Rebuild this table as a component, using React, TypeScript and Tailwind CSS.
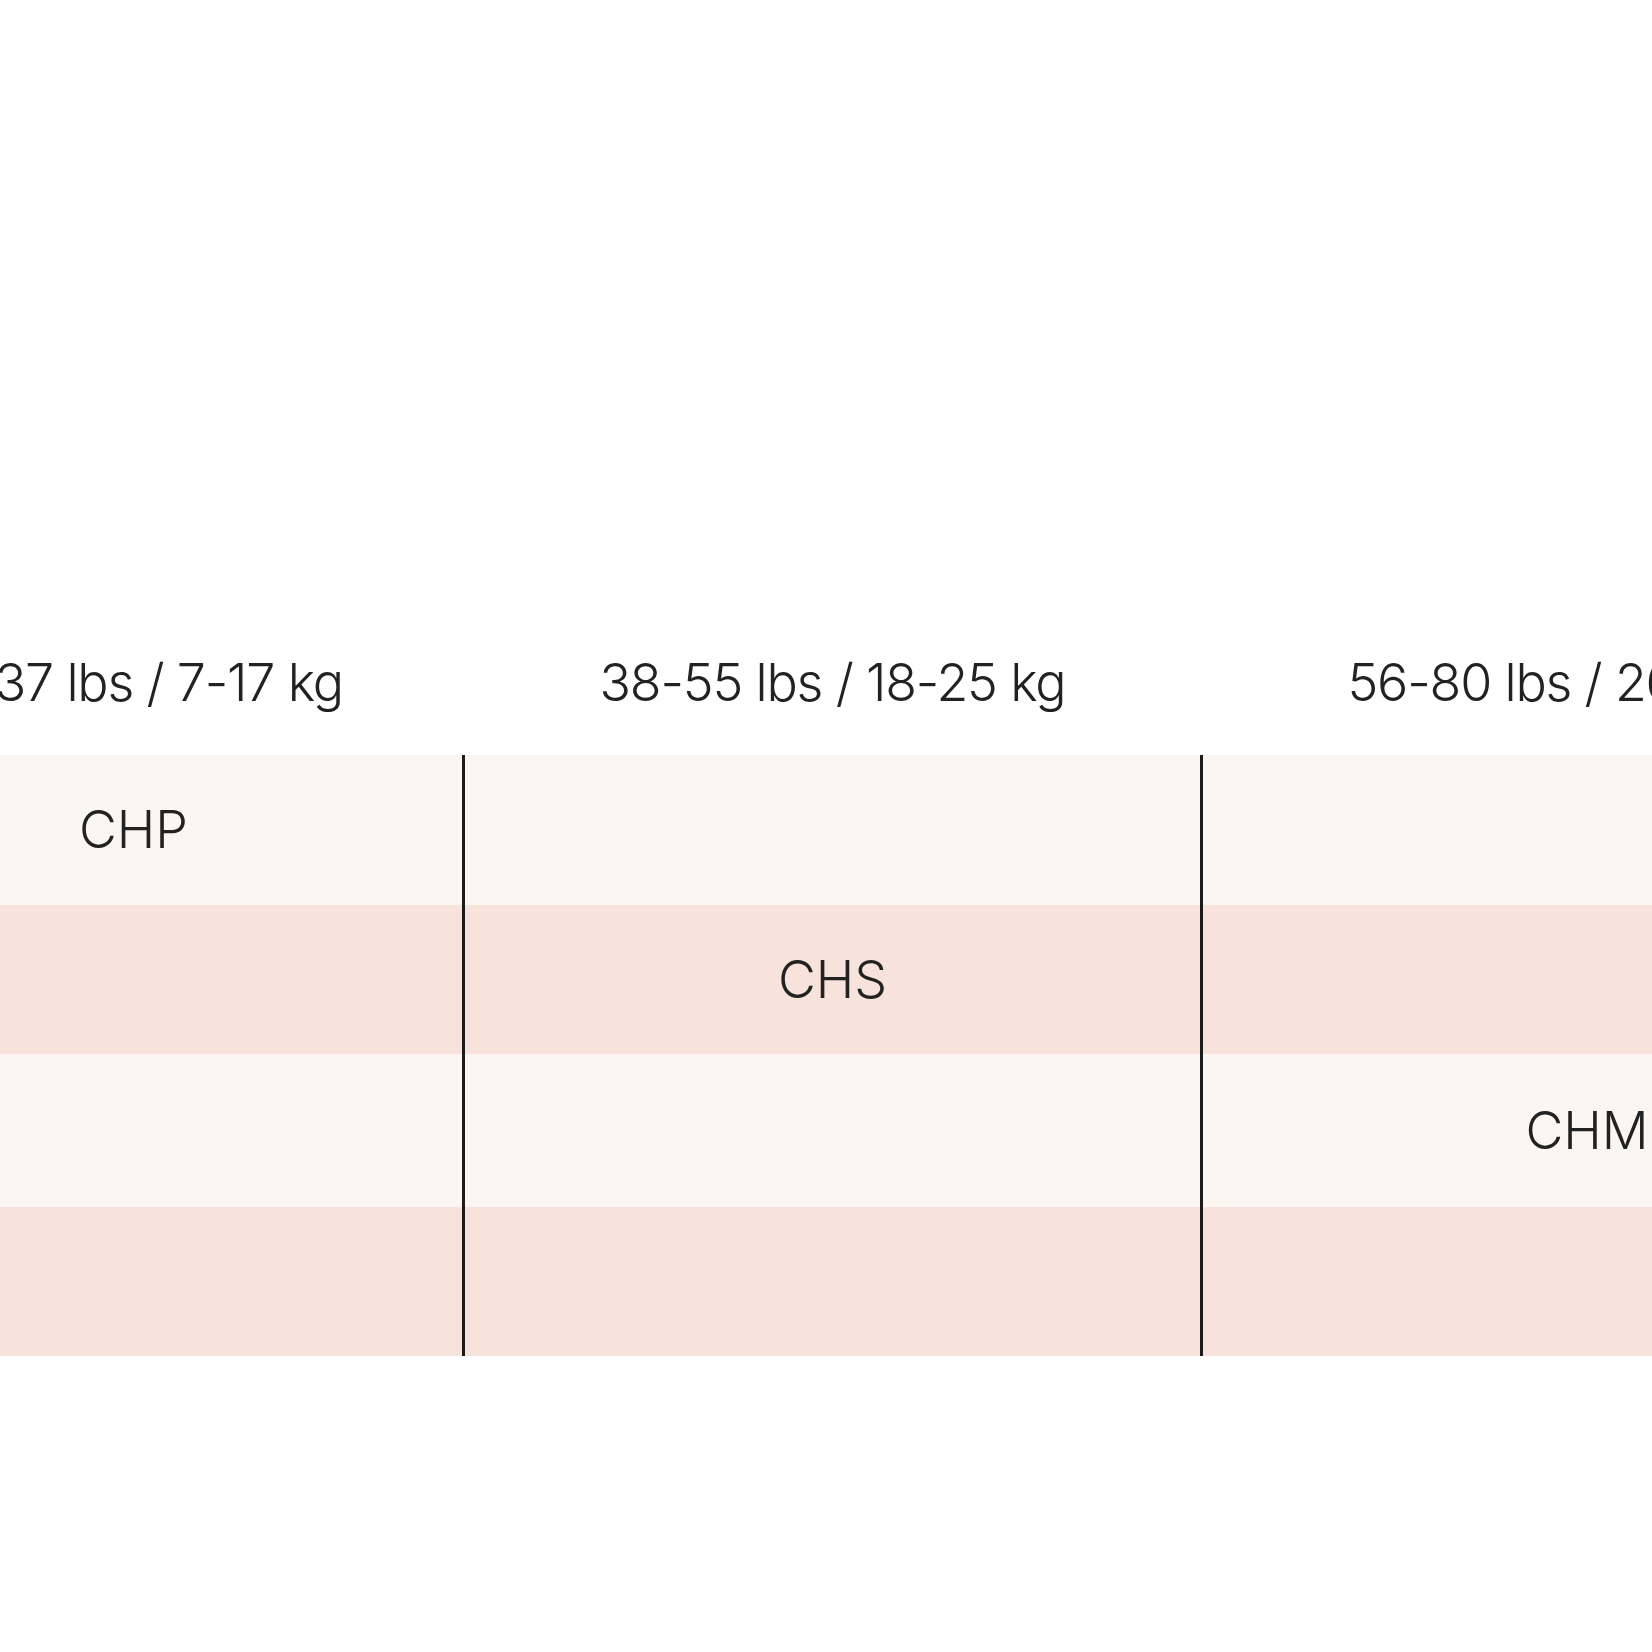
import React from "react";

const weights = ["15-37 lbs / 7-17 kg", "38-55 lbs / 18-25 kg", "56-80 lbs / 26-36 kg"];

const rows = [
  { size: "CHP", col: 0, bg: "bg-[#fbf6f2]", h: "h-[150px]" },
  { size: "CHS", col: 1, bg: "bg-[#f7e3db]", h: "h-[149px]" },
  { size: "CHM", col: 2, bg: "bg-[#fbf6f2]", h: "h-[153px]" },
  { size: "", col: -1, bg: "bg-[#f7e3db]", h: "h-[149px]" },
];

// column widths (px); the table is wider than the viewport and scrolled a bit
const cols = ["w-[657px]", "w-[738px]", "w-[771px]"];

export default function App() {
  return (
    <div className="w-[1652px] h-[1652px] bg-white overflow-hidden font-['Inter',sans-serif] font-light text-[#222] text-[52px]">
      <div className="pt-[605px] -ml-[195px] w-max">
        {/* header */}
        <div className="flex h-[150px] items-center pt-[6px] tracking-[-1.2px]">
          {weights.map((w, i) => (
            <div key={w} className={`${cols[i]} shrink-0 text-center ${i > 0 ? "pl-[3px]" : ""}`}>
              {w}
            </div>
          ))}
        </div>

        {/* body */}
        {rows.map((r, ri) => (
          <div key={ri} className={`flex ${r.h} ${r.bg}`}>
            {cols.map((c, ci) => (
              <div
                key={ci}
                className={`${c} shrink-0 flex items-center justify-center ${
                  ci > 0 ? "border-l-[3px] border-[#1c1c1c]" : ""
                }`}
              >
                {r.col === ci ? r.size : ""}
              </div>
            ))}
          </div>
        ))}
      </div>
    </div>
  );
}
